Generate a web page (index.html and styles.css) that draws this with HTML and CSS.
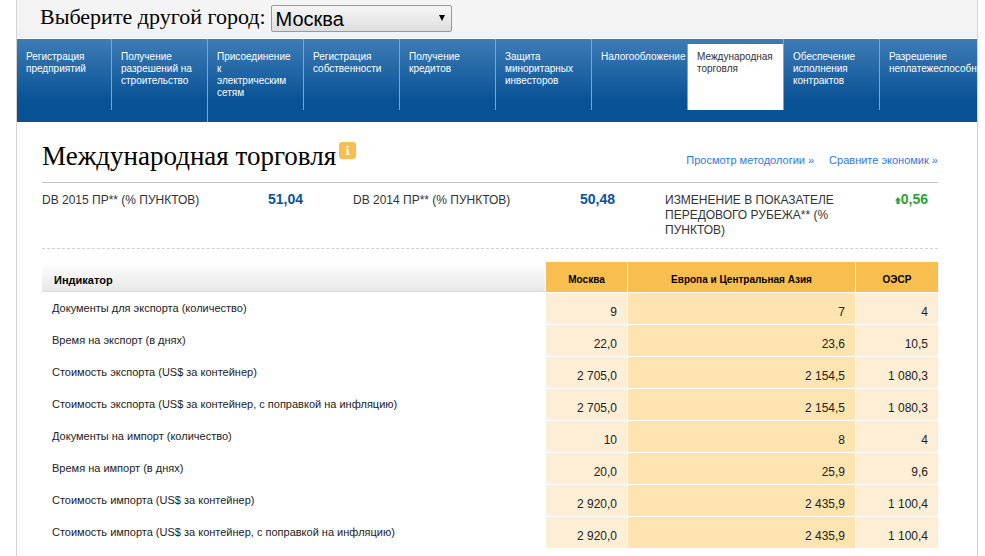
FILE: index.html
```html
<!DOCTYPE html>
<html lang="ru">
<head>
<meta charset="utf-8">
<title>Международная торговля</title>
<link rel="stylesheet" href="styles.css">
</head>
<body>
<div class="page">
  <form class="city-bar">
    <label class="city-label" for="city">Выберите другой город:</label>
    <span class="city-picker">
      <select id="city" class="city-select"><option>Москва</option></select>
    </span>
  </form>
  <nav class="topics">
    <a class="topic" href="#">Регистрация предприятий</a>
    <a class="topic" href="#">Получение разрешений на строительство</a>
    <a class="topic" href="#">Присоединение<br>к<br>электрическим сетям</a>
    <a class="topic" href="#">Регистрация собственности</a>
    <a class="topic" href="#">Получение кредитов</a>
    <a class="topic" href="#">Защита миноритарных инвесторов</a>
    <a class="topic" href="#">Налогообложение</a>
    <a class="topic topic-active" href="#" aria-current="page">Международная торговля</a>
    <a class="topic" href="#">Обеспечение исполнения контрактов</a>
    <a class="topic" href="#">Разрешение неплатежеспособности</a>
  </nav>
  <main class="content">
    <header class="heading">
      <h1 class="title">Международная торговля</h1>
      <svg class="info" viewBox="0 0 17 17" aria-hidden="true">
        <rect width="17" height="17" rx="3" fill="#f9be50"/>
        <circle cx="8.5" cy="5" r="1.2" fill="#fff"/>
        <path d="M6.700 7h2.900v5h1v1H6.600v-1h1V8h-.9z" fill="#fff"/>
      </svg>
      <div class="links">
        <a href="#">Просмотр методологии »</a>
        <a href="#">Сравните экономик »</a>
      </div>
    </header>
    <section class="scores">
      <div class="score"><span class="score-label">DB 2015 ПР** (% ПУНКТОВ)</span><strong class="score-value">51,04</strong></div>
      <div class="score"><span class="score-label">DB 2014 ПР** (% ПУНКТОВ)</span><strong class="score-value">50,48</strong></div>
      <div class="score"><span class="score-label">ИЗМЕНЕНИЕ В ПОКАЗАТЕЛЕ ПЕРЕДОВОГО РУБЕЖА** (% ПУНКТОВ)</span><strong class="score-value score-up"><svg class="arrow" viewBox="0 0 6 7" aria-hidden="true"><path d="M3 0l3 3.500H4.500V7H1.500V3.500H0z" fill="#2ba333"/></svg>0,56</strong></div>
    </section>
    <table class="data">
      <colgroup><col class="col-name"><col class="col-city"><col class="col-region"><col class="col-oecd"></colgroup>
      <thead>
        <tr><th scope="col">Индикатор</th><th scope="col">Москва</th><th scope="col">Европа и Центральная Азия</th><th scope="col">ОЭСР</th></tr>
      </thead>
      <tbody>
        <tr><th scope="row">Документы для экспорта (количество)</th><td>9</td><td>7</td><td>4</td></tr>
        <tr><th scope="row">Время на экспорт (в днях)</th><td>22,0</td><td>23,6</td><td>10,5</td></tr>
        <tr><th scope="row">Стоимость экспорта (US$ за контейнер)</th><td>2 705,0</td><td>2 154,5</td><td>1 080,3</td></tr>
        <tr><th scope="row">Стоимость экспорта (US$ за контейнер, с поправкой на инфляцию)</th><td>2 705,0</td><td>2 154,5</td><td>1 080,3</td></tr>
        <tr><th scope="row">Документы на импорт (количество)</th><td>10</td><td>8</td><td>4</td></tr>
        <tr><th scope="row">Время на импорт (в днях)</th><td>20,0</td><td>25,9</td><td>9,6</td></tr>
        <tr><th scope="row">Стоимость импорта (US$ за контейнер)</th><td>2 920,0</td><td>2 435,9</td><td>1 100,4</td></tr>
        <tr><th scope="row">Стоимость импорта (US$ за контейнер, с поправкой на инфляцию)</th><td>2 920,0</td><td>2 435,9</td><td>1 100,4</td></tr>
      </tbody>
    </table>
  </main>
</div>
</body>
</html>
```
FILE: styles.css
```css
* { box-sizing: border-box; }

body {
  margin: 0;
  background: #fff;
  color: #222;
  font-family: "Liberation Sans", Arial, sans-serif;
}

a { text-decoration: none; }

.page {
  min-height: 100vh;
  margin: 0 7px 0 16px;
  border: solid #d3d3d3;
  border-width: 0 1px;
}

.city-bar {
  display: flex;
  align-items: flex-start;
  gap: 5px;
  padding: 5px 23px 6px;
  background: linear-gradient(#f4f4f4 70%, #f1f1f1);
  border-bottom: 1px solid #fff;
}

.city-label {
  color: #000;
  font: 22px/24px "Liberation Serif", serif;
}

.city-picker { position: relative; }

.city-picker::after {
  content: "";
  position: absolute;
  top: 10px;
  right: 7px;
  border: solid transparent;
  border-width: 6px 3px 0;
  border-top-color: #000;
  pointer-events: none;
}

.city-select {
  display: block;
  width: 181px;
  height: 27px;
  padding: 0 4px;
  appearance: none;
  border: 1px solid #999;
  border-radius: 2px;
  background: linear-gradient(#f6f6f6, #dedede);
  color: #000;
  font: 20px "Liberation Sans", Arial, sans-serif;
}

.topics {
  display: grid;
  grid-template-columns: 94fr repeat(8, 96fr) 98fr;
  align-items: start;
  overflow: hidden;
  background: linear-gradient(#3e7cb6, #085295 75%);
}

.topic {
  min-width: 0;
  min-height: 71px;
  padding: 12px 9px 23px;
  overflow: hidden;
  border-left: 1px solid #7ba6cf;
  color: #fff;
  font-size: 10px;
  line-height: 12px;
}

.topic:first-child { border-left: 0; }

.topic-active {
  min-height: 66px;
  margin-top: 5px;
  padding-top: 7px;
  background: #fff;
  color: #333;
}

.content { padding: 17px 39px 8px 25px; }

.heading {
  display: flex;
  align-items: flex-start;
  padding-bottom: 9px;
  border-bottom: 1px solid #c4c4c4;
}

.title {
  margin: 0;
  color: #000;
  font: 27px/34px "Liberation Serif", serif;
}

.info {
  width: 17px;
  height: 17px;
  margin: 3px 0 0 3px;
}

.links {
  display: flex;
  gap: 15px;
  margin: 14px 0 0 auto;
  font-size: 11px;
  line-height: 14px;
}

.links a { color: #2e7ad9; }

.scores {
  display: grid;
  grid-template-columns: 311fr 312fr 273fr;
  padding: 10px 0;
  border-bottom: 1px dashed #d0d0d0;
}

.score {
  display: flex;
  justify-content: space-between;
  align-items: flex-start;
  padding-right: 50px;
}

.score:last-child { padding-right: 10px; }

.score-label {
  max-width: 180px;
  color: #333;
  font-size: 12px;
  line-height: 15px;
}

.score-value {
  color: #0b5299;
  font-size: 14px;
  line-height: 12px;
}

.score-up { color: #2ba333; }

.arrow {
  width: 6px;
  height: 7px;
}

.data {
  width: 100%;
  margin-top: 13px;
  border-collapse: separate;
  border-spacing: 0;
  table-layout: fixed;
}

.col-city { width: 81px; }
.col-region { width: 228px; }
.col-oecd { width: 83px; }

.data thead th {
  height: 30px;
  padding: 6px 10px 0;
  background: #f9be50;
  color: #000;
  font-size: 10px;
  line-height: 12px;
}

.data thead th:first-child {
  padding-left: 12px;
  background: linear-gradient(#fff, #e8e8e8);
  border-right: 1px solid #fff;
  border-bottom: 1px solid #ddd;
  font-size: 11px;
  text-align: left;
}

.data thead th + th + th { border-left: 1px solid #fff; }

.data tbody th {
  height: 32px;
  padding: 0 10px;
  font-size: 11px;
  font-weight: normal;
  line-height: 14px;
  text-align: left;
}

.data td {
  height: 32px;
  padding: 7px 10px 0;
  border-top: 1px solid #fff;
  background: #feeed5;
  font-size: 12px;
  line-height: 14px;
  text-align: right;
}

.data td + td { border-left: 1px solid #fff; }

.data td:nth-child(3) { background: #fee4b1; }
```
